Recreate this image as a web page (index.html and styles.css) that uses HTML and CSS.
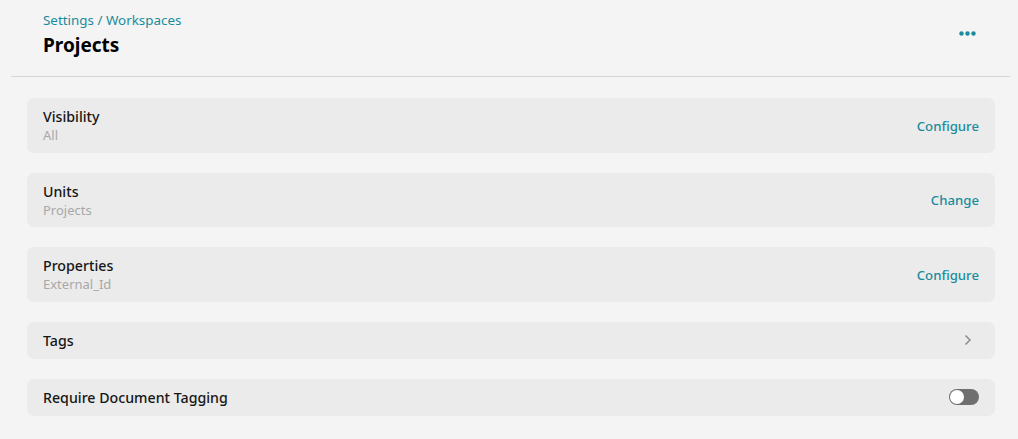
FILE: index.html
```html
<!DOCTYPE html>
<html>
<head>
<meta charset="utf-8">
<link rel="stylesheet" href="styles.css">
</head>
<body>
<header class="page-header">
  <div class="titles">
    <a class="breadcrumb">Settings / Workspaces</a>
    <h1 class="title">Projects</h1>
  </div>
  <button class="more" aria-label="More">
    <svg width="17" height="5" viewBox="0 0 17 5"><circle cx="2.5" cy="2.5" r="2.2" fill="#1a8b9d"/><circle cx="8.5" cy="2.5" r="2.2" fill="#1a8b9d"/><circle cx="14.5" cy="2.5" r="2.2" fill="#1a8b9d"/></svg>
  </button>
</header>
<hr class="divider">
<main class="list">
  <div class="card">
    <div class="text"><div class="label">Visibility</div><div class="sub">All</div></div>
    <a class="action">Configure</a>
  </div>
  <div class="card">
    <div class="text"><div class="label">Units</div><div class="sub">Projects</div></div>
    <a class="action">Change</a>
  </div>
  <div class="card">
    <div class="text"><div class="label">Properties</div><div class="sub">External_Id</div></div>
    <a class="action">Configure</a>
  </div>
  <div class="card compact">
    <div class="text"><div class="label">Tags</div></div>
    <svg class="chevron" width="8" height="12" viewBox="0 0 8 12"><path d="M1.5 1.5 L6 6 L1.5 10.5" fill="none" stroke="#8d8d8d" stroke-width="1.5"/></svg>
  </div>
  <div class="card compact">
    <div class="text"><div class="label">Require Document Tagging</div></div>
    <span class="toggle"><span class="knob"></span></span>
  </div>
</main>
</body>
</html>
```
FILE: styles.css
```css
* { box-sizing: border-box; }
body {
  margin: 0;
  background: #f4f4f4;
  font-family: "Noto Sans", "Liberation Sans", sans-serif;
  color: #161616;
}
.page-header {
  display: flex;
  justify-content: space-between;
  align-items: flex-start;
  padding: 11px 43px 0 43px;
}
.titles { display: flex; flex-direction: column; }
.breadcrumb {
  font-size: 13.4px;
  line-height: 18px;
  color: #1a8b9d;
}
.title {
  margin: 4px 0 0;
  font-size: 19px;
  line-height: 24px;
  font-weight: 700;
  color: #000;
}
.more {
  border: 0;
  background: none;
  padding: 0;
  margin: 20px -1px 0 0;
  width: 17px;
  height: 5px;
  display: flex;
}
.divider {
  border: 0;
  border-top: 1px solid #d6d6d6;
  margin: 19px 8px 0 11px;
  height: 0;
}
.list {
  display: flex;
  flex-direction: column;
  gap: 20px;
  padding: 21px 23px 0 27px;
}
.card {
  background: #ebebeb;
  border-radius: 7px;
  display: flex;
  align-items: center;
  justify-content: space-between;
  padding: 9px 16px 8px;
  min-height: 54.5px;
}
.card.compact {
  min-height: 37px;
  padding: 9px 16px;
}
.label {
  font-size: 14.2px;
  line-height: 19px;
  font-weight: 500;
  color: #161616;
}
.sub {
  font-size: 13px;
  line-height: 18px;
  color: #a8a8a8;
}
.action {
  font-size: 13.2px;
  font-weight: 500;
  color: #1a8b9d;
  margin-top: 0;
}
.chevron { margin-right: 7px; }
.toggle {
  width: 30px;
  height: 16px;
  border-radius: 8px;
  background: #6f6f6f;
  position: relative;
  display: block;
}
.knob {
  position: absolute;
  left: 1px;
  top: 1px;
  width: 14px;
  height: 14px;
  border-radius: 50%;
  background: #fff;
}
```
